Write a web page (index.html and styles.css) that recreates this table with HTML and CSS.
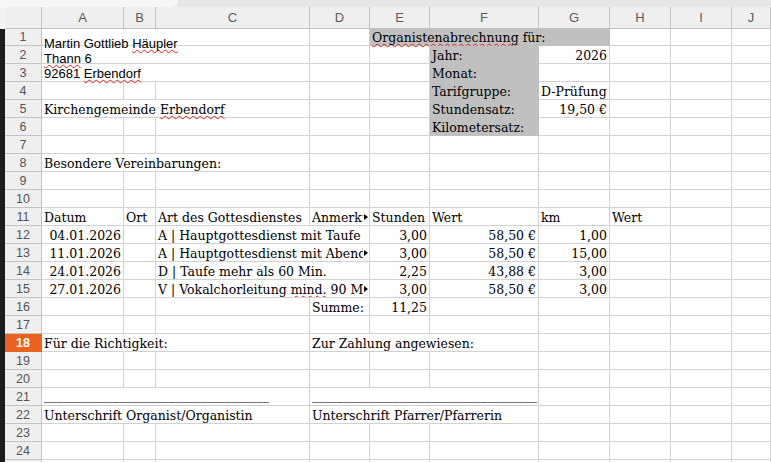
FILE: index.html
```html
<!DOCTYPE html>
<html lang="de">
<head>
<meta charset="utf-8">
<title>Organistenabrechnung</title>
<link rel="stylesheet" href="styles.css">
</head>
<body>
<div class="top"><div class="top-tab"></div></div>
<div class="sheet">
  <!-- header -->
  <div class="st0"></div><div class="ch"></div>
  <div class="ch">A</div><div class="ch">B</div><div class="ch">C</div><div class="ch">D</div><div class="ch">E</div><div class="ch">F</div><div class="ch">G</div><div class="ch">H</div><div class="ch">I</div><div class="ch">J</div>

  <!-- 1 -->
  <div class="st"></div><div class="rh">1</div>
  <div class="c s3 addr"><div class="t">Martin Gottlieb <span class="sp">Häupler</span><br><span class="sp">Thann</span> 6<br>92681 <span class="sp">Erbendorf</span></div></div>
  <div class="c"></div>
  <div class="c s3 g"><span class="t"><span class="sp">Organistenabrechnung</span> für:</span></div>
  <div class="c"></div><div class="c"></div><div class="c"></div>

  <!-- 2 -->
  <div class="st"></div><div class="rh">2</div>
  <div class="c s3"></div><div class="c"></div><div class="c"></div>
  <div class="c g"><span class="t">Jahr:</span></div>
  <div class="c r"><span class="t">2026</span></div>
  <div class="c"></div><div class="c"></div><div class="c"></div>

  <!-- 3 -->
  <div class="st"></div><div class="rh">3</div>
  <div class="c s3"></div><div class="c"></div><div class="c"></div>
  <div class="c g"><span class="t">Monat:</span></div>
  <div class="c"></div>
  <div class="c"></div><div class="c"></div><div class="c"></div>

  <!-- 4 -->
  <div class="st"></div><div class="rh">4</div>
  <div class="c"></div><div class="c"></div><div class="c"></div><div class="c"></div><div class="c"></div>
  <div class="c g"><span class="t">Tarifgruppe:</span></div>
  <div class="c"><span class="t">D-Prüfung</span></div>
  <div class="c"></div><div class="c"></div><div class="c"></div>

  <!-- 5 -->
  <div class="st"></div><div class="rh">5</div>
  <div class="c s3"><span class="t">Kirchengemeinde <span class="sp">Erbendorf</span></span></div>
  <div class="c"></div><div class="c"></div>
  <div class="c g"><span class="t">Stundensatz:</span></div>
  <div class="c r"><span class="t">19,50 €</span></div>
  <div class="c"></div><div class="c"></div><div class="c"></div>

  <!-- 6 -->
  <div class="st"></div><div class="rh">6</div>
  <div class="c"></div><div class="c"></div><div class="c"></div><div class="c"></div><div class="c"></div>
  <div class="c g"><span class="t">Kilometersatz:</span></div>
  <div class="c"></div>
  <div class="c"></div><div class="c"></div><div class="c"></div>

  <!-- 7 -->
  <div class="st"></div><div class="rh">7</div>
  <div class="c"></div><div class="c"></div><div class="c"></div><div class="c"></div><div class="c"></div><div class="c"></div><div class="c"></div><div class="c"></div><div class="c"></div><div class="c"></div>

  <!-- 8 -->
  <div class="st"></div><div class="rh">8</div>
  <div class="c s3"><span class="t">Besondere Vereinbarungen:</span></div>
  <div class="c"></div><div class="c"></div><div class="c"></div><div class="c"></div><div class="c"></div><div class="c"></div><div class="c"></div>

  <!-- 9 -->
  <div class="st"></div><div class="rh">9</div>
  <div class="c"></div><div class="c"></div><div class="c"></div><div class="c"></div><div class="c"></div><div class="c"></div><div class="c"></div><div class="c"></div><div class="c"></div><div class="c"></div>

  <!-- 10 -->
  <div class="st"></div><div class="rh">10</div>
  <div class="c"></div><div class="c"></div><div class="c"></div><div class="c"></div><div class="c"></div><div class="c"></div><div class="c"></div><div class="c"></div><div class="c"></div><div class="c"></div>

  <!-- 11 -->
  <div class="st"></div><div class="rh">11</div>
  <div class="c"><span class="t">Datum</span></div>
  <div class="c"><span class="t">Ort</span></div>
  <div class="c"><span class="t">Art des Gottesdienstes</span></div>
  <div class="c ov"><span class="t">Anmerkung</span></div>
  <div class="c"><span class="t">Stunden</span></div>
  <div class="c"><span class="t">Wert</span></div>
  <div class="c"><span class="t">km</span></div>
  <div class="c"><span class="t">Wert</span></div>
  <div class="c"></div><div class="c"></div>

  <!-- 12 -->
  <div class="st"></div><div class="rh">12</div>
  <div class="c r"><span class="t">04.01.2026</span></div>
  <div class="c"></div>
  <div class="c s2"><span class="t">A | Hauptgottesdienst mit Taufe</span></div>
  <div class="c r"><span class="t">3,00</span></div>
  <div class="c r"><span class="t">58,50 €</span></div>
  <div class="c r"><span class="t">1,00</span></div>
  <div class="c"></div><div class="c"></div><div class="c"></div>

  <!-- 13 -->
  <div class="st"></div><div class="rh">13</div>
  <div class="c r"><span class="t">11.01.2026</span></div>
  <div class="c"></div>
  <div class="c s2 ov"><span class="t">A | Hauptgottesdienst mit Abendmahl</span></div>
  <div class="c r"><span class="t">3,00</span></div>
  <div class="c r"><span class="t">58,50 €</span></div>
  <div class="c r"><span class="t">15,00</span></div>
  <div class="c"></div><div class="c"></div><div class="c"></div>

  <!-- 14 -->
  <div class="st"></div><div class="rh">14</div>
  <div class="c r"><span class="t">24.01.2026</span></div>
  <div class="c"></div>
  <div class="c s2"><span class="t">D | Taufe mehr als 60 Min.</span></div>
  <div class="c r"><span class="t">2,25</span></div>
  <div class="c r"><span class="t">43,88 €</span></div>
  <div class="c r"><span class="t">3,00</span></div>
  <div class="c"></div><div class="c"></div><div class="c"></div>

  <!-- 15 -->
  <div class="st"></div><div class="rh">15</div>
  <div class="c r"><span class="t">27.01.2026</span></div>
  <div class="c"></div>
  <div class="c s2 ov"><span class="t">V | Vokalchorleitung <span class="sp">mind.</span> 90 Min.</span></div>
  <div class="c r"><span class="t">3,00</span></div>
  <div class="c r"><span class="t">58,50 €</span></div>
  <div class="c r"><span class="t">3,00</span></div>
  <div class="c"></div><div class="c"></div><div class="c"></div>

  <!-- 16 -->
  <div class="st"></div><div class="rh">16</div>
  <div class="c"></div><div class="c"></div><div class="c"></div>
  <div class="c"><span class="t">Summe:</span></div>
  <div class="c r"><span class="t">11,25</span></div>
  <div class="c"></div><div class="c"></div><div class="c"></div><div class="c"></div><div class="c"></div>

  <!-- 17 -->
  <div class="st"></div><div class="rh">17</div>
  <div class="c"></div><div class="c"></div><div class="c"></div><div class="c"></div><div class="c"></div><div class="c"></div><div class="c"></div><div class="c"></div><div class="c"></div><div class="c"></div>

  <!-- 18 -->
  <div class="st"></div><div class="rh sel">18</div>
  <div class="c s3"><span class="t">Für die Richtigkeit:</span></div>
  <div class="c s3"><span class="t">Zur Zahlung angewiesen:</span></div>
  <div class="c"></div><div class="c"></div><div class="c"></div><div class="c"></div>

  <!-- 19 -->
  <div class="st"></div><div class="rh">19</div>
  <div class="c"></div><div class="c"></div><div class="c"></div><div class="c"></div><div class="c"></div><div class="c"></div><div class="c"></div><div class="c"></div><div class="c"></div><div class="c"></div>

  <!-- 20 -->
  <div class="st"></div><div class="rh">20</div>
  <div class="c"></div><div class="c"></div><div class="c"></div><div class="c"></div><div class="c"></div><div class="c"></div><div class="c"></div><div class="c"></div><div class="c"></div><div class="c"></div>

  <!-- 21 -->
  <div class="st"></div><div class="rh">21</div>
  <div class="c s3 line"><span class="t">____________________________________</span></div>
  <div class="c s3 line"><span class="t">____________________________________</span></div>
  <div class="c"></div><div class="c"></div><div class="c"></div><div class="c"></div>

  <!-- 22 -->
  <div class="st"></div><div class="rh">22</div>
  <div class="c s3"><span class="t">Unterschrift Organist/Organistin</span></div>
  <div class="c s3"><span class="t">Unterschrift Pfarrer/Pfarrerin</span></div>
  <div class="c"></div><div class="c"></div><div class="c"></div><div class="c"></div>

  <!-- 23 -->
  <div class="st"></div><div class="rh">23</div>
  <div class="c"></div><div class="c"></div><div class="c"></div><div class="c"></div><div class="c"></div><div class="c"></div><div class="c"></div><div class="c"></div><div class="c"></div><div class="c"></div>

  <!-- 24 -->
  <div class="st"></div><div class="rh">24</div>
  <div class="c"></div><div class="c"></div><div class="c"></div><div class="c"></div><div class="c"></div><div class="c"></div><div class="c"></div><div class="c"></div><div class="c"></div><div class="c"></div>

  <!-- 25 -->
  <div class="st"></div><div class="rh">25</div>
  <div class="c"></div><div class="c"></div><div class="c"></div><div class="c"></div><div class="c"></div><div class="c"></div><div class="c"></div><div class="c"></div><div class="c"></div><div class="c"></div>
</div>
</body>
</html>
```
FILE: styles.css
```css
html, body {
  margin: 0;
  padding: 0;
  height: 100%;
  overflow: hidden;
  background: #ffffff;
}

.top {
  height: 7px;
  background: #e6e6e6;
}
.top-tab {
  width: 178px;
  height: 7px;
  background: #f6f6f6;
  border-bottom-right-radius: 6px;
}

.sheet {
  display: grid;
  grid-template-columns: 5px 37px 82px 32px 154px 60px 60px 109px 71px 61px 61px 1fr;
  grid-template-rows: 22px 17px repeat(24, 18px);
}

.st0 { background: #f3f3f3; }
.st { background: #1c1c1c; }

.ch, .rh {
  background: #efefef;
  border-right: 1px solid #c3c3c3;
  border-bottom: 1px solid #c3c3c3;
  font-family: "Liberation Sans", Arial, sans-serif;
  font-size: 12.5px;
  color: #555555;
  display: flex;
  align-items: center;
  justify-content: center;
  box-sizing: border-box;
}
.ch { font-size: 13px; color: #5c5c5c; }

.rh.sel {
  background: #e9621e;
  border-color: #e9621e;
  color: #ffffff;
  font-weight: bold;
}

.c {
  box-sizing: border-box;
  border-right: 1px solid #d2d2d2;
  border-bottom: 1px solid #d2d2d2;
  font-family: "DejaVu Serif", "Liberation Serif", serif;
  font-size: 12.5px;
  color: #000000;
  display: flex;
  align-items: flex-end;
  padding: 0 2px;
  white-space: nowrap;
  min-width: 0;
  position: relative;
}
.r { justify-content: flex-end; }
.s2 { grid-column: span 2; }
.s3 { grid-column: span 3; }

.g {
  background: #c0c0c0;
  border-color: #c0c0c0;
}

.addr {
  align-items: flex-start;
  font-family: "Liberation Sans", Arial, sans-serif;
  font-size: 13px;
}
.addr .t {
  position: relative;
  z-index: 1;
  padding-top: 7px;
  line-height: 15px;
}

.sp {
  text-decoration: underline wavy #e02020;
  text-decoration-thickness: 1px;
  text-underline-offset: 1px;
  text-decoration-skip-ink: none;
}

.line { padding-bottom: 2px; }

.ov { padding-right: 6px; overflow: hidden; }
.ov .t {
  overflow: hidden;
  min-width: 0;
  padding-bottom: 3px;
  margin-bottom: -3px;
}
.ov::after {
  content: "";
  position: absolute;
  right: 1px;
  top: 6px;
  border-left: 4px solid #000000;
  border-top: 3px solid transparent;
  border-bottom: 3px solid transparent;
}
```
